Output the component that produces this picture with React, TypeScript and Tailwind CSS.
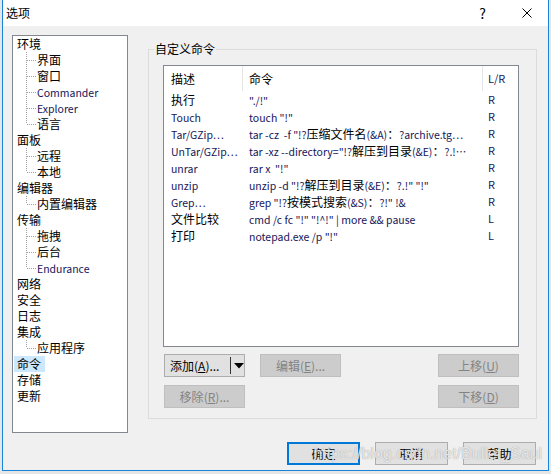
import React from "react";

type Node = { label: string; children?: string[]; selected?: boolean };

const tree: Node[] = [
  { label: "环境", children: ["界面", "窗口", "Commander", "Explorer", "语言"] },
  { label: "面板", children: ["远程", "本地"] },
  { label: "编辑器", children: ["内置编辑器"] },
  { label: "传输", children: ["拖拽", "后台", "Endurance"] },
  { label: "网络" },
  { label: "安全" },
  { label: "日志" },
  { label: "集成", children: ["应用程序"] },
  { label: "命令", selected: true },
  { label: "存储" },
  { label: "更新" },
];

const commands = [
  ["执行", "\"./!\"", "R"],
  ["Touch", "touch \"!\"", "R"],
  ["Tar/GZip…", "tar -cz  -f \"!?压缩文件名(&A)：?archive.tg…", "R"],
  ["UnTar/GZip…", "tar -xz --directory=\"!?解压到目录(&E)：?.!…", "R"],
  ["unrar", "rar x  \"!\"", "R"],
  ["unzip", "unzip -d \"!?解压到目录(&E)：?.!\" \"!\"", "R"],
  ["Grep…", "grep \"!?按模式搜索(&S)：?!\" !&", "R"],
  ["文件比较", "cmd /c fc \"!\" \"!^!\" | more && pause", "L"],
  ["打印", "notepad.exe /p \"!\"", "L"],
];

const CJK = /[\u3000-\u9fff\uff00-\uffef]/;

// latin runs are narrower than the hanzi and read navy (ClearType)
function Mixed({ text }: { text: string }) {
  const parts = text.match(/[\u3000-\u9fff\uff00-\uffef]+|[^\u3000-\u9fff\uff00-\uffef]+/g) ?? [];
  return (
    <>
      {parts.map((p, i) => (
        <span
          key={i}
          className={CJK.test(p) ? "text-black text-[12px]" : "text-[#16165a] text-[10.5px] whitespace-pre"}
        >
          {p}
        </span>
      ))}
    </>
  );
}

function Branch({ last }: { last: boolean }) {
  return (
    <svg width="16" height="16" className="shrink-0" shapeRendering="crispEdges">
      <line x1="5.5" y1="0" x2="5.5" y2={last ? 8 : 16} stroke="#a0a0a0" strokeDasharray="1 1" />
      <line x1="6" y1="8.5" x2="15" y2="8.5" stroke="#a0a0a0" strokeDasharray="1 1" />
    </svg>
  );
}

function TreePanel() {
  return (
    <div className="w-[116px] h-[398px] shrink-0 border border-[#828790] bg-white text-[12px] leading-[16px]">
      {tree.map((n) => (
        <div key={n.label}>
          <div className="h-[16px] flex items-center pl-[1px]">
            <span className={n.selected ? "bg-[#cce8ff] px-[3px] pr-[4px]" : "px-[3px]"}>{n.label}</span>
          </div>
          {n.children?.map((c, i) => (
            <div key={c} className="h-[16px] flex items-center pl-[8px]">
              <Branch last={i === n.children!.length - 1} />
              <span className="whitespace-nowrap">
                <Mixed text={c} />
              </span>
            </div>
          ))}
        </div>
      ))}
    </div>
  );
}

function Key({ label, k, tail }: { label: string; k: string; tail: string }) {
  return (
    <>
      {label}(<span className="underline underline-offset-[1px]">{k}</span>){tail}
    </>
  );
}

function Btn({ children, disabled }: { children: React.ReactNode; disabled?: boolean }) {
  return (
    <div
      className={[
        "w-[81px] h-[23px] flex items-center justify-center border text-[12px]",
        disabled ? "bg-[#cccccc] border-[#bfbfbf] text-[#838383]" : "bg-[#e1e1e1] border-[#adadad] text-black",
      ].join(" ")}
    >
      {children}
    </div>
  );
}

function ListView() {
  return (
    <div className="w-[356px] h-[282px] border border-[#828790] bg-white text-[12px]">
      <div className="flex h-[25px] items-center">
        <div className="w-[78px] pl-[7px]">描述</div>
        <div className="w-px h-full bg-[#e5e5e5]" />
        <div className="w-[239px] pl-[6px]">命令</div>
        <div className="w-px h-full bg-[#e5e5e5]" />
        <div className="flex-1 pl-[5px] text-[11px] text-[#16165a]">L/R</div>
      </div>
      {commands.map(([d, c, s]) => (
        <div key={d} className="flex h-[17px] items-center whitespace-nowrap">
          <div className="w-[79px] pl-[7px] overflow-hidden">
            <Mixed text={d} />
          </div>
          <div className="w-[240px] pl-[6px] overflow-hidden">
            <Mixed text={c} />
          </div>
          <div className="flex-1 pl-[5px] text-[11px] text-[#16165a]">{s}</div>
        </div>
      ))}
    </div>
  );
}

export default function App() {
  return (
    <div className="w-[551px] h-[474px] bg-[#e6e6e6] pl-[2px] overflow-hidden font-['Noto_Sans_CJK_SC',sans-serif]">
      <div className="relative w-[547px] h-[471px] border-x border-b border-[#1883d7] bg-[#f0f0f0] text-black">
        {/* title bar */}
        <div className="h-[26px] bg-white flex items-center pl-[3px] text-[12px]">
          <span>选项</span>
          <span className="ml-auto mr-[36px] text-[14px] leading-none">?</span>
          <svg width="10" height="10" className="mr-[16px]" viewBox="0 0 10 10">
            <path d="M0.5 0.5 L9.5 9.5 M9.5 0.5 L0.5 9.5" stroke="#000" strokeWidth="1" />
          </svg>
        </div>

        <div className="flex pl-[9px] pt-[9px]">
          <TreePanel />
          <div className="relative ml-[20px] mt-[14px] w-[389px] h-[370px] border border-[#dcdcdc] pl-[14px] pt-[15px]">
            <span className="absolute left-[5px] -top-[9px] px-[1px] bg-[#f0f0f0] text-[12px] leading-[16px]">
              自定义命令
            </span>
            <ListView />
            <div className="ml-[1px] mt-[7px] w-[355px] flex">
              <div className="w-[81px] h-[23px] flex items-center border border-[#adadad] bg-[#e1e1e1] text-[12px]">
                <span className="pl-[5px] w-[65px]">
                  <Key label="添加" k="A" tail="..." />
                </span>
                <div className="w-px h-[17px] bg-[#333]" />
                <svg width="10" height="6" className="ml-[3px]" viewBox="0 0 10 6">
                  <path d="M0 0 H10 L5 5.5 Z" fill="#000" />
                </svg>
              </div>
              <div className="ml-[15px]">
                <Btn disabled>
                  <Key label="编辑" k="E" tail="..." />
                </Btn>
              </div>
              <div className="ml-auto">
                <Btn disabled>
                  <Key label="上移" k="U" tail="" />
                </Btn>
              </div>
            </div>
            <div className="ml-[1px] mt-[8px] w-[355px] flex">
              <Btn disabled>
                <Key label="移除" k="R" tail="..." />
              </Btn>
              <div className="ml-auto">
                <Btn disabled>
                  <Key label="下移" k="D" tail="" />
                </Btn>
              </div>
            </div>
          </div>
        </div>

        <div className="mt-[9px] flex justify-end gap-[15px] pr-[12px] text-[12px]">
          <div className="w-[73px] h-[23px] flex items-center justify-center border-2 border-[#0078d7] bg-[#e1e1e1]">确定</div>
          <div className="w-[73px] h-[23px] flex items-center justify-center border border-[#adadad] bg-[#e1e1e1]">取消</div>
          <div className="w-[73px] h-[23px] flex items-center justify-center border border-[#adadad] bg-[#e1e1e1]">帮助</div>
        </div>

        {/* csdn watermark */}
        <span className="absolute right-[6px] top-[445px] font-['Liberation_Sans',sans-serif] text-[16px] leading-[18px] text-white/75 [text-shadow:0_0_1px_#8c8c8c] pointer-events-none">
          https://blog.csdn.net/Bullet_Saul
        </span>
      </div>
    </div>
  );
}
